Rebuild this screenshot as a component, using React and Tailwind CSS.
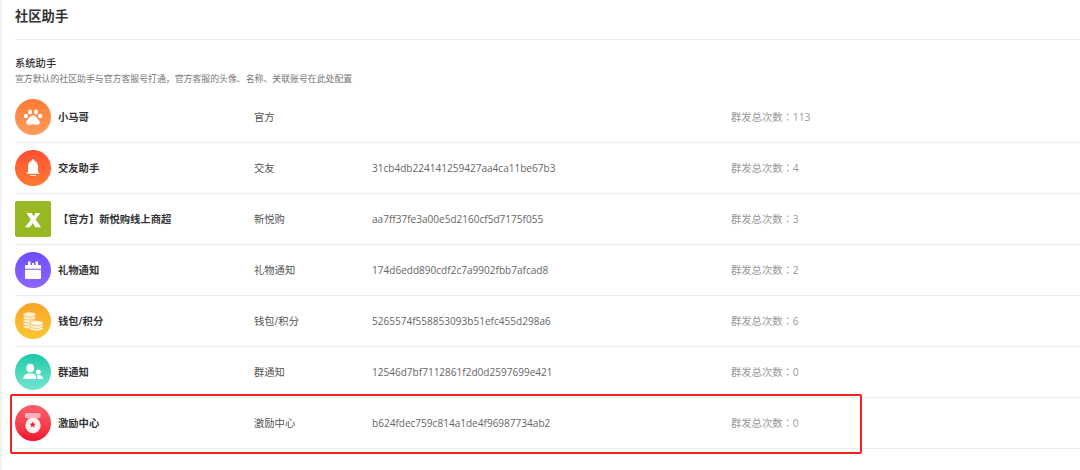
function PawIcon() {
  return (
    <svg viewBox="0 0 36 36" className="h-9 w-9" fill="#fff">
      <ellipse cx="10.8" cy="17" rx="2" ry="2.3" />
      <ellipse cx="15" cy="13" rx="2" ry="2.5" />
      <ellipse cx="21" cy="13" rx="2" ry="2.5" />
      <ellipse cx="25.2" cy="17" rx="2" ry="2.3" />
      <path d="M18 16.5c-2.5 0-3.700 2-4.800 3.500-1 1.300-2.400 2.700-1.900 4.300.5 1.500 2.200 1.700 3.500 1.400 1-.2 2.100-.5 3.200-.5s2.200.3 3.200.5c1.300.3 3-.1 3.500-1.400.5-1.600-.9-3-1.900-4.300-1.100-1.500-2.300-3.500-4.800-3.500z" />
    </svg>
  );
}

function BellIcon() {
  return (
    <svg viewBox="0 0 36 36" className="h-9 w-9" fill="#fff">
      <circle cx="18" cy="10.2" r="1.3" />
      <path d="M18 10.800c-3.300 0-5 2.700-5 6v3.700c0 1.300-.7 2.300-1.700 3.200h13.400c-1-.9-1.700-1.900-1.700-3.200v-3.700c0-3.300-1.700-6-5-6z" />
      <rect x="15" y="25" width="6" height="1.1" rx="0.5" />
    </svg>
  );
}

function XLogo() {
  return (
    <svg viewBox="0 0 36 36" className="h-9 w-9">
      <path d="M10.500 9.500c1.800.1 3.300.8 4.300 2.500h-3.200c-.5-.7-.9-1.600-1.100-2.500z" fill="#e8a531" />
      <path d="M20.800 12h4.500L14.800 26.300H10z" fill="#fff" />
      <path d="M11.500 12h5l9.500 14.300h-5.500z" fill="#fff" />
    </svg>
  );
}

function GiftIcon() {
  return (
    <svg viewBox="0 0 36 36" className="h-9 w-9" fill="#fff">
      <path d="M13 9.500h2.500V13H13zM20.500 9.500H23V13h-2.500zM17 11h2v2h-2z" />
      <path d="M11 13h14c.6 0 1 .4 1 1v2.800H10V14c0-.6.400-1 1-1z" />
      <path d="M10 17.700h16v8c0 .8-.6 1.300-1.300 1.300H11.300c-.7 0-1.300-.5-1.300-1.300z" />
    </svg>
  );
}

function CoinsIcon() {
  return (
    <svg viewBox="0 0 36 36" className="h-9 w-9" stroke="#f4a82b" strokeWidth="0.6">
      <g fill="#fff1d2">
        <ellipse cx="14.5" cy="23.5" rx="6.5" ry="2.5" />
        <ellipse cx="14.5" cy="20.5" rx="6.5" ry="2.5" />
        <ellipse cx="14.5" cy="17.5" rx="6.5" ry="2.5" />
        <ellipse cx="14.5" cy="14.5" rx="6.5" ry="2.5" />
        <ellipse cx="14.5" cy="11.5" rx="6.5" ry="2.5" />
      </g>
      <g fill="#fff6e2">
        <ellipse cx="21.5" cy="25.5" rx="6.8" ry="2.6" />
        <ellipse cx="21.5" cy="22.8" rx="6.8" ry="2.6" />
        <ellipse cx="21.5" cy="20" rx="6.8" ry="2.6" />
      </g>
    </svg>
  );
}

function PeopleIcon() {
  return (
    <svg viewBox="0 0 36 36" className="h-9 w-9" fill="#fff">
      <ellipse cx="15.2" cy="14" rx="3.8" ry="4.3" />
      <path d="M8.300 24c0-2.200 2.300-3.700 4.200-4.600h5.400c1.800.9 3.300 2.400 3.300 4.600 0 .6-.4 1-1 1H9.300c-.6 0-1-.4-1-1z" />
      <circle cx="23.3" cy="18" r="2.5" />
      <path d="M21.500 21.200h3.600c1.400.6 2.900 1.800 2.900 3 0 .5-.3.800-.8.800H22.500c0-1.400-.4-2.700-1-3.800z" />
    </svg>
  );
}

function MedalIcon() {
  return (
    <svg viewBox="0 0 36 36" className="h-9 w-9">
      <rect x="10" y="8" width="15.5" height="5" rx="1" fill="#ffb0b6" />
      <rect x="12.5" y="13" width="10.5" height="2" fill="#ff7f8c" />
      <circle cx="18" cy="20.5" r="7.7" fill="#fff" fillOpacity="0.92" />
      <path d="M17.700 16.500l.9 2 2.200.2-1.700 1.500.5 2.200-1.900-1.200-1.900 1.200.5-2.200-1.700-1.500 2.200-.2z" fill="#ee2140" />
    </svg>
  );
}

const rows = [
  { name: '小马哥', tag: '官方', id: '', count: 113, bg: 'rounded-full bg-linear-to-b from-[#ff7a33] to-[#ff9d5c]', icon: <PawIcon /> },
  { name: '交友助手', tag: '交友', id: '31cb4db224141259427aa4ca11be67b3', count: 4, bg: 'rounded-full bg-linear-to-b from-[#ff4d35] to-[#ff7a2e]', icon: <BellIcon /> },
  { name: '【官方】新悦购线上商超', tag: '新悦购', id: 'aa7ff37fe3a00e5d2160cf5d7175f055', count: 3, bg: 'rounded-[2px] bg-[#97b823]', icon: <XLogo /> },
  { name: '礼物通知', tag: '礼物通知', id: '174d6edd890cdf2c7a9902fbb7afcad8', count: 2, bg: 'rounded-full bg-linear-to-b from-[#6f4cfb] to-[#8d66ff]', icon: <GiftIcon /> },
  { name: '钱包/积分', tag: '钱包/积分', id: '5265574f558853093b51efc455d298a6', count: 6, bg: 'rounded-full bg-linear-to-b from-[#f9a428] to-[#fcc62f]', icon: <CoinsIcon /> },
  { name: '群通知', tag: '群通知', id: '12546d7bf7112861f2d0d2597699e421', count: 0, bg: 'rounded-full bg-linear-to-b from-[#10c9a8] to-[#6fe6d2]', icon: <PeopleIcon /> },
  { name: '激励中心', tag: '激励中心', id: 'b624fdec759c814a1de4f96987734ab2', count: 0, bg: 'rounded-full bg-linear-to-b from-[#f9606c] to-[#f4092f]', icon: <MedalIcon />, marked: true },
];

export default function App() {
  return (
    <div className="h-[470px] w-[1080px] overflow-hidden border-l-2 border-[#f3f3f3] bg-white pl-[13px] font-['Open_Sans','Noto_Sans_CJK_SC',sans-serif]">
      <div className="flex h-[40px] items-center border-b border-[#ececec] pb-[6px]">
        <h1 className="text-[13.3px] font-bold text-[#333]">社区助手</h1>
      </div>
      <div className="pt-[16px]">
        <h2 className="text-[10.3px] leading-[14px] font-medium text-[#333]">系统助手</h2>
        <p className="mt-[2px] text-[8.9px] leading-[14px] text-[#777]">
          宣方默认的社区助手与官方客服号打通，官方客服的头像、名称、关联账号在此处配置
        </p>
      </div>
      <ul className="mt-[6px]">
        {rows.map((row) => (
          <li
            key={row.name}
            className="relative flex h-[51px] items-center border-b border-[#eeeeee] text-[10.3px] text-[#555]"
          >
            <div className={`h-9 w-9 shrink-0 overflow-hidden ${row.bg}`}>{row.icon}</div>
            <div className="ml-[7px] w-[196px] pt-[1px] font-semibold text-[#333]">{row.name}</div>
            <div className="w-[118px] pt-[1px]">{row.tag}</div>
            <div className="w-[359px] pt-[1px] text-[10.05px] text-[#666]">{row.id}</div>
            <div className="pt-[1px] text-[#999]">
              群发总次数<span className="font-['Noto_Sans_CJK_TC',sans-serif]">：</span>{row.count}
            </div>
            {row.marked && (
              <div className="absolute top-[-4px] left-[-5px] h-[60px] w-[852px] rounded-[2px] border-2 border-[#f5211c]" />
            )}
          </li>
        ))}
      </ul>
    </div>
  );
}
